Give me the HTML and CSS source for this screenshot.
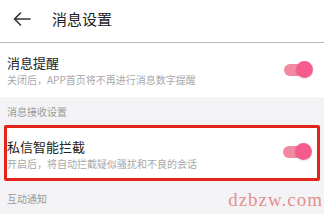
FILE: index.html
```html
<!DOCTYPE html>
<html lang="zh">
<head>
<meta charset="utf-8">
<link rel="stylesheet" href="styles.css">
</head>
<body>
<div class="page">
  <header class="header">
    <svg class="back" width="18" height="14" viewBox="0 0 18 14">
      <path d="M17 7H1.8M7.5 1L1.5 7l6 6" fill="none" stroke="#333" stroke-width="1.6" stroke-linecap="round" stroke-linejoin="round"/>
    </svg>
    <div class="title">消息设置</div>
  </header>
  <div class="row row-first">
    <div class="texts">
      <div class="row-title">消息提醒</div>
      <div class="row-sub">关闭后，APP首页将不再进行消息数字提醒</div>
    </div>
    <div class="toggle"><span class="track"></span><span class="thumb"></span></div>
  </div>
  <div class="section">消息接收设置</div>
  <div class="mark">
    <div class="row row-marked">
      <div class="texts">
        <div class="row-title">私信智能拦截</div>
        <div class="row-sub">开启后，将自动拦截疑似骚扰和不良的会话</div>
      </div>
      <div class="toggle"><span class="track"></span><span class="thumb"></span></div>
    </div>
  </div>
  <div class="section section-last">互动通知</div>
  <div class="watermark">dzbzw.com</div>
</div>
</body>
</html>
```
FILE: styles.css
```css
* { box-sizing: border-box; margin: 0; padding: 0; }
html, body { width: 324px; height: 214px; overflow: hidden; }
body { background: #f3f3f5; font-family: "Noto Sans CJK SC", "Noto Sans", sans-serif; color: #222; }
.page { position: relative; width: 324px; height: 214px; display: flex; flex-direction: column; }
.header { height: 43px; background: #fff; border-bottom: 1px solid #b8b8b8; display: flex; align-items: center; padding: 0 0 5px 13px; }
.back { display: block; margin-top: 1px; }
.title { margin-left: 21px; font-size: 15px; line-height: 20px; color: #222; }
.row { background: #fff; display: flex; align-items: center; justify-content: space-between; padding: 0 11px 0 7px; }
.row-first { height: 54px; }
.texts { display: flex; flex-direction: column; }
.row-title { font-size: 13px; line-height: 16px; color: #222; }
.row-sub { font-size: 10px; line-height: 14px; color: #a8a8a8; margin-top: 2px; }
.row-first .texts { margin-top: 1px; }
.section { height: 28px; padding: 8px 0 0 7px; font-size: 10px; line-height: 14px; color: #9a9a9a; }
.mark { margin: 0 4px; border: 3px solid #e1251b; border-radius: 2px; }
.row-marked { height: 50px; padding: 0 5px 0 0; }
.row-marked .texts { margin-top: 4px; }
.section-last { padding-top: 11px; }
.toggle { position: relative; width: 29px; height: 18px; }
.row-marked .toggle { margin-top: -2px; }
.track { position: absolute; left: 0; top: 3px; width: 20px; height: 12px; border-radius: 6px; background: #ef8aa0; }
.thumb { position: absolute; right: 0; top: 0; width: 17px; height: 17px; border-radius: 50%; background: #f65b8d; box-shadow: 0 1px 2px rgba(0,0,0,0.12); }
.watermark { position: absolute; right: 1px; top: 189px; font-family: "Liberation Serif", "DejaVu Serif", serif; font-size: 19px; line-height: 22px; color: #e59090; letter-spacing: 1px; }
```
